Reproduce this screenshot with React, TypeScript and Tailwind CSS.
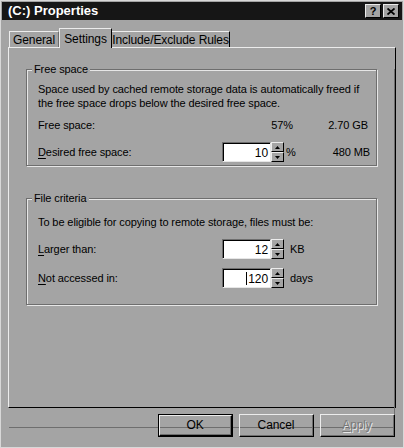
import type { ReactNode } from 'react'

const face = 'bg-[#a4a4a4]'

function Mn({ children }: { children: ReactNode }) {
  return <span className="underline underline-offset-2">{children}</span>
}

function Spin({ value, caret }: { value: string; caret?: boolean }) {
  return (
    <div className="flex h-[20px] w-[62px]">
      {/* TEXTBOX */}
      <div className="flex-1 border-t border-l border-[#6e6e6e] border-r border-b border-r-[#e6e6e6] border-b-[#e6e6e6]">
        <div className="flex h-full items-center justify-end border-t border-l border-black bg-white pr-[2px] text-[12px] text-black">
          {caret && <span className="mr-[1px] inline-block h-[13px] w-px bg-black" />}
          {value}
        </div>
      </div>
      {/* ARROWS */}
      <div className="flex w-[13px] flex-col">
        <SpinBtn up />
        <SpinBtn />
      </div>
    </div>
  )
}

function SpinBtn({ up }: { up?: boolean }) {
  return (
    <div className={`flex flex-1 items-center justify-center ${face} border border-t-[#ececec] border-l-[#ececec] border-r-black border-b-black`}>
      <svg width="5" height="3" viewBox="0 0 5 3">
        {up ? <path d="M2.5 0 L5 3 L0 3 Z" fill="#000" /> : <path d="M0 0 L5 0 L2.5 3 Z" fill="#000" />}
      </svg>
    </div>
  )
}

function Group({ title, className, children }: { title: string; className?: string; children: ReactNode }) {
  return (
    <div className={`relative mx-[17px] border border-[#6e6e6e] shadow-[1px_1px_0_#e6e6e6,inset_1px_1px_0_#e6e6e6] ${className ?? ''}`}>
      <span className={`absolute left-[5px] top-[-8px] ${face} px-[2px] leading-[14px]`}>{title}</span>
      {children}
    </div>
  )
}

function Button({ children, def, disabled }: { children: ReactNode; def?: boolean; disabled?: boolean }) {
  return (
    <div className={`h-[23px] w-[75px] ${def ? 'border border-black' : ''}`}>
      <div className="h-full border border-t-[#ececec] border-l-[#ececec] border-r-black border-b-black">
        <div className={`flex h-full items-center justify-center border-r border-b border-[#6e6e6e] text-[12px] ${disabled ? 'text-[#7a7a7a] [text-shadow:1px_1px_0_#e8e8e8]' : 'text-black'}`}>
          {children}
        </div>
      </div>
    </div>
  )
}

export default function App() {
  return (
    <div
      className={`h-[448px] w-[404px] ${face} whitespace-nowrap border border-[#d8d8d8] p-[1px] text-[11px] tracking-[-0.1px] text-black`}
      style={{ fontFamily: '"Liberation Sans", Arial, sans-serif' }}
    >
      {/* TITLE BAR */}
      <div className="flex h-[18px] items-center justify-between bg-[#161616] pl-[6px] pr-[3px]">
        <span className="text-[13px] font-bold tracking-normal text-white">(C:) Properties</span>
        <div className="flex gap-[2px]">
          <div className={`flex h-[14px] w-[16px] items-center justify-center ${face} border border-t-[#ececec] border-l-[#ececec] border-r-black border-b-black text-[11px] font-bold leading-none`}>?</div>
          <div className={`flex h-[14px] w-[16px] items-center justify-center ${face} border border-t-[#ececec] border-l-[#ececec] border-r-black border-b-black`}>
            <svg width="8" height="7" viewBox="0 0 8 7">
              <path d="M0.5 0.5 L7.5 6.5 M7.5 0.5 L0.5 6.5" stroke="#000" strokeWidth="1.8" />
            </svg>
          </div>
        </div>
      </div>

      {/* TABS */}
      <div className="relative z-10 ml-[7px] mt-[8px] flex h-[19px] items-end text-[12px]">
        <div className="flex h-[16px] w-[50px] items-center justify-center border-l border-t border-[#ececec] border-r-[#6e6e6e] border-r">General</div>
        <div className={`mb-[-1px] flex h-[20px] w-[53px] items-start justify-center ${face} border-l border-t border-[#ececec] border-r border-r-black pt-[1px]`}>Settings</div>
        <div className="flex h-[16px] w-[118px] items-center justify-center border-t border-[#ececec] border-r border-r-black">Include/Exclude Rules</div>
      </div>

      {/* PANEL */}
      <div className="ml-[6px] h-[361px] w-[388px] border border-t-[#ececec] border-l-[#ececec] border-r-black border-b-black">
        <div className="h-full border-r border-b border-[#6e6e6e]">
          <Group title="Free space" className="mt-[21px] h-[97px] pl-[11px]">
            <div className="mt-[12px] leading-[14px]">
              <div>Space used by cached remote storage data is automatically freed if</div>
              <div>the free space drops below the desired free space.</div>
            </div>
            <div className="mt-[8px] flex h-[14px] items-center">
              <span className="w-[193px]">Free space:</span>
              <span className="w-[62px] text-right">57%</span>
              <span className="w-[75px] text-right">2.70 GB</span>
            </div>
            <div className="mt-[10px] flex items-center">
              <span className="w-[184px]"><Mn>D</Mn>esired free space:</span>
              <Spin value="10" />
              <span className="ml-[2px] w-[9px]">%</span>
              <span className="w-[75px] text-right">480 MB</span>
            </div>
          </Group>

          <Group title="File criteria" className="mt-[32px] h-[107px] pl-[11px]">
            <div className="mt-[16px] leading-[14px]">To be eligible for copying to remote storage, files must be:</div>
            <div className="mt-[10px] flex items-center">
              <span className="w-[184px]"><Mn>L</Mn>arger than:</span>
              <Spin value="12" />
              <span className="ml-[6px]">KB</span>
            </div>
            <div className="mt-[9px] flex items-center">
              <span className="w-[184px]"><Mn>N</Mn>ot accessed in:</span>
              <Spin value="120" caret />
              <span className="ml-[6px]">days</span>
            </div>
          </Group>
        </div>
      </div>

      {/* BUTTONS */}
      <div className="mr-[7px] mt-[6px] flex justify-end gap-[6px]">
        <Button def>OK</Button>
        <Button>Cancel</Button>
        <Button disabled><Mn>A</Mn>pply</Button>
      </div>
    </div>
  )
}
